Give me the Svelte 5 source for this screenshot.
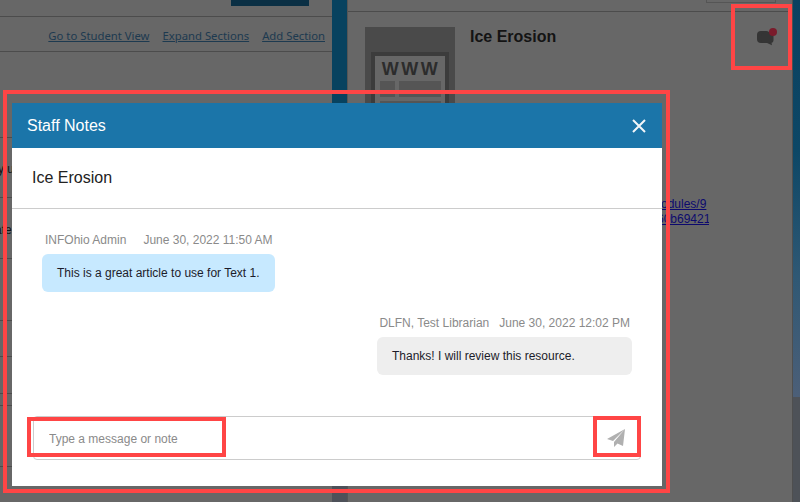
<script lang="ts">
	const leftRows = [
		{ h: 86, text: '', x: 0 },
		{ h: 60, text: 'y u', x: -2 },
		{ h: 61, text: 'ate', x: -5 },
		{ h: 62, text: '', x: 0 },
		{ h: 36, text: '', x: 0 },
		{ h: 37, text: '', x: 0 },
		{ h: 12, text: '', x: 0 },
		{ h: 61, text: '', x: 0 }
	];
	const links = ['Go to Student View', 'Expand Sections', 'Add Section'];
</script>

<div class="page">
	<section class="left">
		<div class="topbar"><span class="primary"></span></div>
		<nav class="links">
			{#each links as l}
				<a href="#top">{l}</a>
			{/each}
		</nav>
		{#each leftRows as row}
			<div class="row" style="height: {row.h}px"><span style="margin-left: {row.x}px">{row.text}</span></div>
		{/each}
	</section>

	<div class="strip"></div>

	<section class="right">
		<div class="righttop"><span class="tab"></span></div>
		<div class="detail">
			<svg class="thumb" width="90" height="90" viewBox="0 0 90 90">
				<rect width="90" height="90" fill="#4a4a4a" />
				<rect x="6" y="25" width="78" height="65" fill="#3c3c3c" />
				<rect x="10" y="29" width="70" height="61" fill="#676767" />
				<text x="46" y="48" text-anchor="middle" class="www">WWW</text>
				<rect x="15" y="54" width="15" height="16" fill="#555" />
				<rect x="34" y="54" width="42" height="16" fill="#555" />
				<rect x="15" y="74" width="61" height="4" fill="#555" />
			</svg>
			<div class="info">
				<div class="infohead">
					<h2>Ice Erosion</h2>
					<span class="noteicon">
						<svg width="24" height="24" viewBox="0 0 24 24">
							<rect x="0" y="5" width="13" height="12" rx="4" fill="#353535" />
							<rect x="4" y="7" width="12.5" height="10" rx="3" fill="#353535" />
							<path d="M9 16.5h5.5l.5 2.7z" fill="#353535" />
							<circle cx="16" cy="6" r="4" fill="#7a1b2b" />
						</svg>
					</span>
				</div>
				<a class="resource" href="#top">modules/9<br />c60b69421</a>
			</div>
		</div>
	</section>

	<div class="edge"></div>

	<div class="modal">
		<header>
			<span>Staff Notes</span>
			<svg class="close" width="14" height="14" viewBox="0 0 14 14">
				<path d="M1 1l12 12M13 1L1 13" stroke="#f2f6f9" stroke-width="2" fill="none" />
			</svg>
		</header>
		<div class="subject">Ice Erosion</div>
		<div class="thread">
			<div class="msg">
				<div class="meta"><span>INFOhio Admin</span><span>June 30, 2022 11:50 AM</span></div>
				<div class="bubble blue">This is a great article to use for Text 1.</div>
			</div>
			<div class="msg mine">
				<div class="meta"><span>DLFN, Test Librarian</span><span>June 30, 2022 12:02 PM</span></div>
				<div class="bubble grey">Thanks! I will review this resource.</div>
			</div>
		</div>
		<div class="composer">
			<input type="text" placeholder="Type a message or note" />
			<button type="button" aria-label="Send">
				<svg width="18" height="18" viewBox="0 0 18 18">
					<path d="M18 0L0 10l6 2zM18 0L7 13v5l3.5-3.5L16 17z" fill="#b0b0b0" />
				</svg>
			</button>
		</div>
	</div>

	<div class="mark mark-modal"></div>
	<div class="mark mark-icon"></div>
	<div class="mark mark-input"></div>
	<div class="mark mark-send"></div>
</div>

<style>
	:global(body) {
		margin: 0;
		background: #676767;
	}
	.page {
		position: relative;
		display: grid;
		grid-template-columns: 332px 16px 444px 8px;
		width: 800px;
		height: 502px;
		overflow: hidden;
		background: #676767;
		font-family: 'Liberation Sans', Arial, sans-serif;
	}
	.left {
		min-width: 0;
	}
	.topbar {
		height: 17px;
		box-sizing: border-box;
		border-bottom: 1px solid #4c4c4c;
		padding-left: 231px;
	}
	.primary {
		display: block;
		width: 78px;
		height: 6px;
		background: #0a2f44;
	}
	.links {
		display: flex;
		justify-content: flex-end;
		gap: 13px;
		height: 35px;
		box-sizing: border-box;
		padding: 11px 7px 0 0;
		border-bottom: 1px solid #4c4c4c;
		font-family: 'Noto Sans', sans-serif;
		font-size: 11.3px;
		line-height: 16px;
	}
	.links a {
		color: #1d3a50;
	}
	.row {
		box-sizing: border-box;
		border-bottom: 1px solid #4c4c4c;
		display: flex;
		align-items: center;
		font-size: 12px;
		color: #111;
	}
	.row span {
		margin-top: 3px;
	}
	.strip {
		background: linear-gradient(#07425f 0, #07425f 79%, #4d5159 79%);
		border-right: 1px solid #555;
		box-sizing: border-box;
	}
	.right {
		min-width: 0;
	}
	.righttop {
		height: 12px;
		box-sizing: border-box;
		border-bottom: 1px solid #4c4c4c;
		padding-left: 358px;
	}
	.tab {
		display: block;
		width: 70px;
		height: 3px;
		box-sizing: border-box;
		border: 1px solid #555;
		border-top: 0;
	}
	.detail {
		display: flex;
		gap: 15px;
		padding: 15px 0 0 17px;
	}
	.thumb {
		flex: none;
	}
	.www {
		font-family: 'Liberation Sans', sans-serif;
		font-weight: 700;
		font-size: 18px;
		letter-spacing: 2.5px;
		fill: #2c2c2c;
	}
	.info {
		width: 322px;
	}
	.infohead {
		display: flex;
		justify-content: space-between;
		align-items: flex-start;
	}
	h2 {
		margin: 1px 0 0;
		font-size: 16px;
		line-height: 18px;
		color: #141414;
	}
	.noteicon {
		display: block;
		margin: -1px 11px 0 0;
	}
	.resource {
		display: block;
		width: 58px;
		margin: 143px 0 0 181px;
		overflow: hidden;
		white-space: nowrap;
		font-size: 12px;
		line-height: 15px;
		color: #0c0a6e;
	}
	.edge {
		background: linear-gradient(#0b4160, #0c4766 30%, #2f5874 55%, #4c5f78 79%, #4e5258 79%);
		border-left: 1px solid #4f4f4f;
	}

	.modal {
		position: absolute;
		left: 12px;
		top: 103px;
		width: 650px;
		height: 383px;
		display: flex;
		flex-direction: column;
		background: #fff;
	}
	header {
		display: flex;
		align-items: center;
		justify-content: space-between;
		height: 45px;
		flex: none;
		padding: 0 15px;
		background: #1b75a9;
		color: #fff;
		font-size: 16px;
	}
	.close {
		margin: 1px 1px 0 0;
	}
	.subject {
		height: 61px;
		flex: none;
		box-sizing: border-box;
		padding: 20px 20px 0;
		border-bottom: 1px solid #ccc;
		font-size: 16px;
		line-height: 19px;
		color: #222;
	}
	.thread {
		flex: 1;
		padding: 24px 30px 0;
		display: flex;
		flex-direction: column;
		gap: 24px;
	}
	.msg {
		display: flex;
		flex-direction: column;
		align-items: flex-start;
	}
	.msg.mine {
		align-items: flex-end;
	}
	.meta {
		display: flex;
		gap: 17px;
		padding: 0 3px;
		font-size: 12px;
		line-height: 14px;
		color: #8a8a8a;
	}
	.mine .meta {
		gap: 10px;
		padding-right: 2px;
	}
	.bubble {
		margin-top: 7px;
		padding: 12px 15px;
		border-radius: 6px;
		font-size: 12px;
		line-height: 14px;
		color: #1c1c2a;
	}
	.blue {
		background: #c7e9ff;
	}
	.grey {
		width: 255px;
		box-sizing: border-box;
		background: #eeeeee;
	}
	.composer {
		display: flex;
		height: 44px;
		box-sizing: border-box;
		margin: 0 21px 26px;
		border: 1px solid #ccc;
		border-radius: 4px;
		flex: none;
	}
	input {
		flex: 1;
		min-width: 0;
		border: 0;
		outline: 0;
		padding: 1px 0 0 15px;
		background: none;
		font-family: inherit;
		font-size: 12px;
	}
	input::placeholder {
		color: #8a8a8a;
		opacity: 1;
	}
	button {
		width: 46px;
		border: 0;
		padding: 0 2px 1px 0;
		background: none;
		display: flex;
		align-items: center;
		justify-content: center;
	}

	/* review annotations drawn over the screenshot */
	.mark {
		position: absolute;
		box-sizing: border-box;
		border: 4px solid #ff4545;
	}
	.mark-modal {
		left: 3px;
		top: 90px;
		width: 667px;
		height: 403px;
	}
	.mark-icon {
		left: 731px;
		top: 4px;
		width: 61px;
		height: 66px;
	}
	.mark-input {
		left: 27px;
		top: 417px;
		width: 199px;
		height: 40px;
	}
	.mark-send {
		left: 593px;
		top: 416px;
		width: 48px;
		height: 41px;
	}
</style>
